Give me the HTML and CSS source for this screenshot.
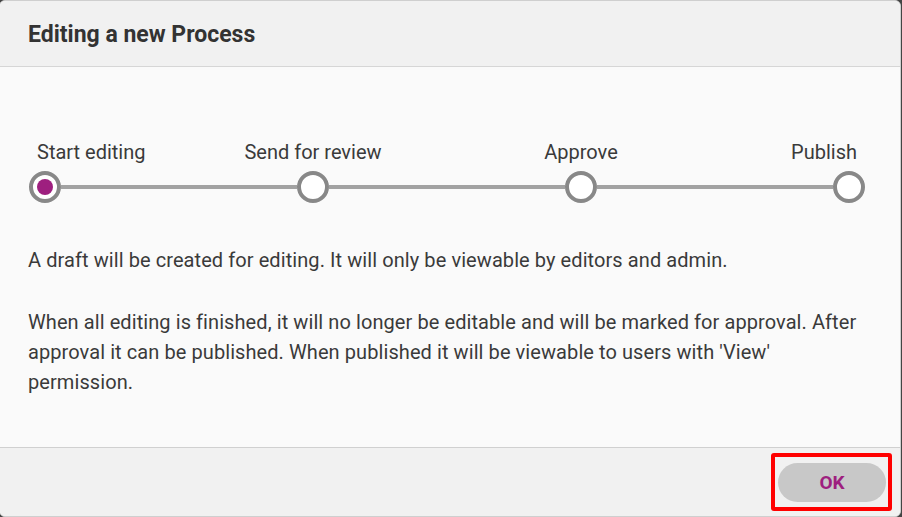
FILE: index.html
```html
<!DOCTYPE html>
<html lang="en">
<head>
    <meta charset="UTF-8">
    <title>Editing a new Process</title>
    <link rel="stylesheet" href="styles.css">
</head>
<body>
    <div class="dialog">
        <div class="dialog-header">
            <h1>Editing a new Process</h1>
        </div>
        <div class="dialog-body">
            <div class="stepper">
                <span class="step-label first">Start editing</span>
                <span class="step-label col-3">Send for review</span>
                <span class="step-label col-5">Approve</span>
                <span class="step-label last">Publish</span>

                <span class="step-dot active"></span>
                <span class="step-line"></span>
                <span class="step-dot"></span>
                <span class="step-line"></span>
                <span class="step-dot"></span>
                <span class="step-line"></span>
                <span class="step-dot"></span>
            </div>
            <p>A draft will be created for editing. It will only be viewable by editors and admin.</p>
            <p>When all editing is finished, it will no longer be editable and will be marked for approval. After approval it can be published. When published it will be viewable to users with 'View' permission.</p>
        </div>
        <div class="dialog-footer">
            <span class="highlight">
                <button class="ok-button">OK</button>
            </span>
        </div>
    </div>
</body>
</html>
```

FILE: styles.css
```css
body {
    margin: 0;
    background-color: #444;
    font-family: Roboto, 'Liberation Sans', sans-serif;
    color: #3a3a3a;
}
.dialog {
    box-sizing: border-box;
    width: 902px;
    height: 517px;
    margin-left: -1px;
    border: 1px solid #cfcfcf;
    border-radius: 6px;
    background-color: #fafafa;
    display: flex;
    flex-direction: column;
    overflow: hidden;
}
.dialog-header {
    height: 66px;
    display: flex;
    align-items: center;
    padding: 2px 0 0 28px;
    box-sizing: border-box;
    background-color: #f1f1f1;
    border-bottom: 1px solid #d6d6d6;
}
.dialog-header h1 {
    margin: 0;
    font-size: 23px;
    font-weight: 700;
    color: #333;
}
.dialog-body {
    flex: 1;
    padding: 73px 0 0 29px;
}
.stepper {
    width: 836px;
    display: grid;
    grid-template-columns: 32px 1fr 32px 1fr 32px 1fr 32px;
    row-gap: 7px;
    font-size: 20px;
    line-height: 24px;
}
.step-label {
    grid-row: 1;
    white-space: nowrap;
    justify-self: center;
}
.step-label.first {
    grid-column: 1;
    justify-self: start;
    margin-left: 8px;
}
.step-label.col-3 {
    grid-column: 3;
}
.step-label.col-5 {
    grid-column: 5;
}
.step-label.last {
    grid-column: 7;
    justify-self: end;
    margin-right: 8px;
}
.step-dot {
    grid-row: 2;
    box-sizing: border-box;
    width: 32px;
    height: 32px;
    border: 4px solid #888;
    border-radius: 50%;
    background-color: #fff;
    display: flex;
    align-items: center;
    justify-content: center;
}
.step-dot.active::after {
    content: '';
    width: 16px;
    height: 16px;
    border-radius: 50%;
    background-color: #9e1f7f;
}
.step-line {
    grid-row: 2;
    align-self: center;
    height: 4px;
    background-color: #a2a2a2;
}
.dialog-body p {
    margin: 0 0 32px -1px;
    padding-right: 30px;
    font-size: 20px;
    line-height: 30px;
    letter-spacing: 0.08px;
}
.dialog-body .stepper + p {
    margin-top: 42px;
}
.dialog-footer {
    height: 68px;
    display: flex;
    align-items: center;
    justify-content: flex-end;
    padding-right: 8px;
    background-color: #f1f1f1;
    border-top: 1px solid #d0d0d0;
}
.highlight {
    display: flex;
    padding: 6px 2px 5px 3px;
    border: 4px solid #ff0000;
    border-radius: 3px;
}
.ok-button {
    width: 108px;
    height: 39px;
    border: none;
    border-radius: 20px;
    background-color: #c8c8c8;
    color: #9e1f7f;
    font-family: Roboto, 'Liberation Sans', sans-serif;
    font-size: 19px;
    font-weight: 700;
    cursor: pointer;
}
```
